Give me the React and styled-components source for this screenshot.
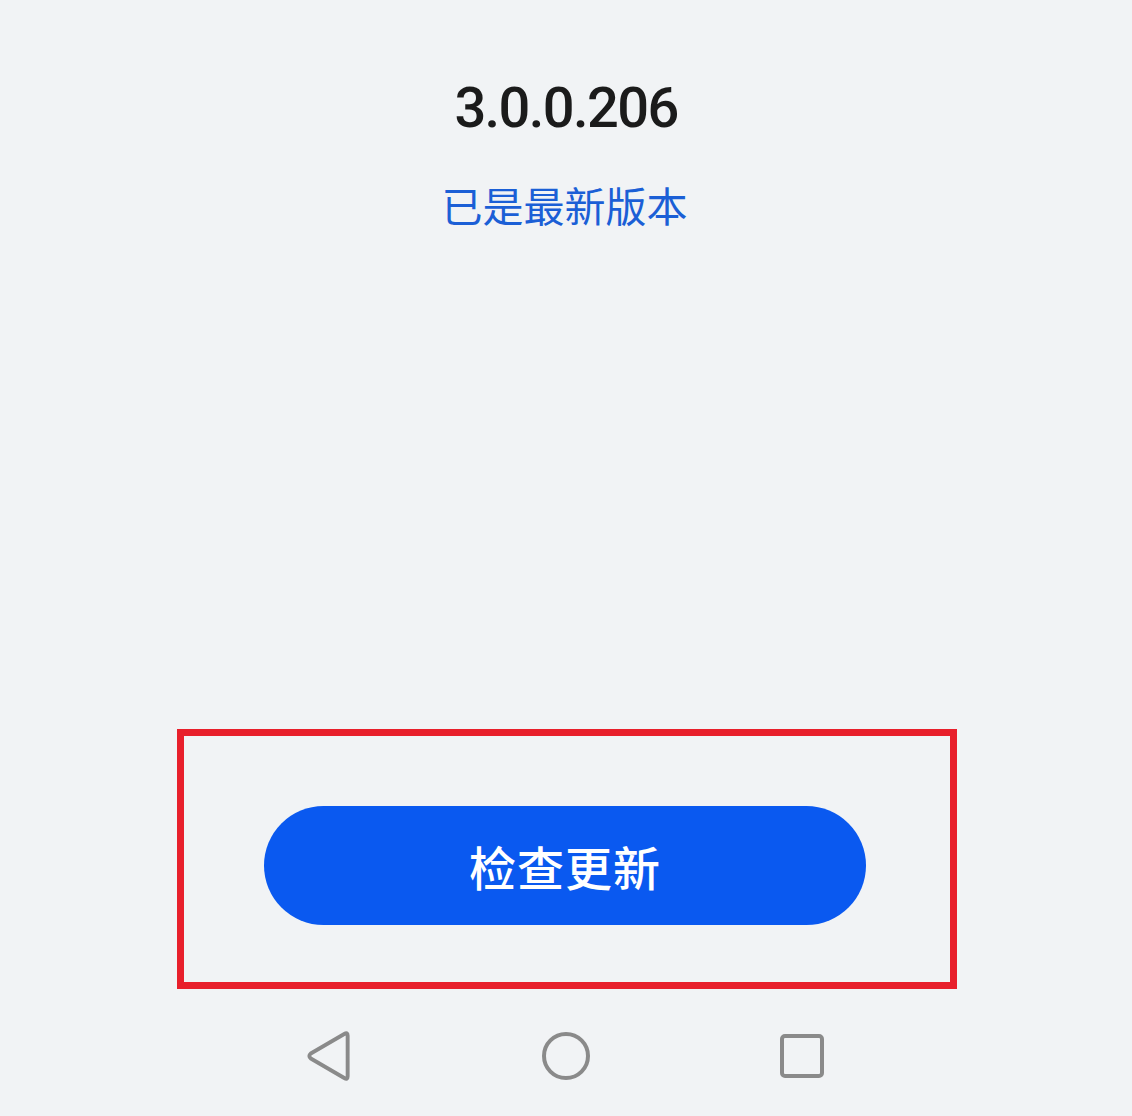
import React from "react";
import styled, { createGlobalStyle } from "styled-components";

const Global = createGlobalStyle`
  html, body { margin: 0; padding: 0; background: #f1f3f5; }
  body { font-family: "Noto Sans", "Noto Sans CJK SC", sans-serif; }
`;

const Page = styled.div`
  width: 1132px;
  height: 1116px;
  display: flex;
  flex-direction: column;
  align-items: center;
  background: #f1f3f5;
  overflow: hidden;
`;

const Header = styled.div`
  display: flex;
  flex-direction: column;
  align-items: center;
  padding-top: 80px;
  gap: 48px;
`;

const Version = styled.div`
  font-family: Roboto, "Noto Sans", sans-serif;
  font-size: 56px;
  font-weight: 500;
  line-height: 1;
  letter-spacing: -1.6px;
  color: #1b1b1b;
`;

const Status = styled.div`
  font-family: "Noto Sans CJK SC", sans-serif;
  font-size: 41px;
  line-height: 1;
  color: #1b5fd6;
  margin-left: -3px;
`;

const Spacer = styled.div`
  flex: 1;
`;

const Highlight = styled.div`
  box-sizing: border-box;
  width: 780px;
  height: 260px;
  margin-left: 2px;
  border: 7px solid #e81f2b;
  display: flex;
  align-items: center;
  justify-content: center;
  padding-top: 12px;
`;

const Button = styled.button`
  width: 602px;
  height: 119px;
  margin-left: -4px;
  border: none;
  border-radius: 60px;
  background: #0a59f0;
  color: #ffffff;
  font-family: "Noto Sans CJK SC", sans-serif;
  font-size: 47px;
  font-weight: 500;
  letter-spacing: 1px;
  display: flex;
  align-items: center;
  justify-content: center;
  cursor: pointer;
`;

const NavBar = styled.div`
  height: 127px;
  display: flex;
  align-items: center;
  justify-content: center;
  gap: 186px;
  padding-top: 6px;
  box-sizing: border-box;
`;

const NavIcon = styled.svg`
  width: 50px;
  height: 50px;
  display: block;
`;

const Back = () => (
  <NavIcon viewBox="0 0 50 50">
    <path
      d="M45 4.5 L45 45.5 Q45 49 41.5 47 L7 27.5 Q4 25 7 22.5 L41.5 3 Q45 1 45 4.5 Z"
      fill="none"
      stroke="#8a8a8a"
      strokeWidth="4"
      strokeLinejoin="round"
      transform="translate(-1 0) scale(0.97 1)"
    />
  </NavIcon>
);

const Home = () => (
  <NavIcon viewBox="0 0 50 50">
    <circle cx="25" cy="25" r="22" fill="none" stroke="#8a8a8a" strokeWidth="4" />
  </NavIcon>
);

const Recent = () => (
  <NavIcon viewBox="0 0 50 50">
    <rect x="5" y="5" width="40" height="40" rx="3" fill="none" stroke="#8a8a8a" strokeWidth="4" />
  </NavIcon>
);

export default function App() {
  return (
    <>
      <Global />
      <Page>
        <Header>
          <Version>3.0.0.206</Version>
          <Status>已是最新版本</Status>
        </Header>
        <Spacer />
        <Highlight>
          <Button>检查更新</Button>
        </Highlight>
        <NavBar>
          <Back />
          <Home />
          <Recent />
        </NavBar>
      </Page>
    </>
  );
}
